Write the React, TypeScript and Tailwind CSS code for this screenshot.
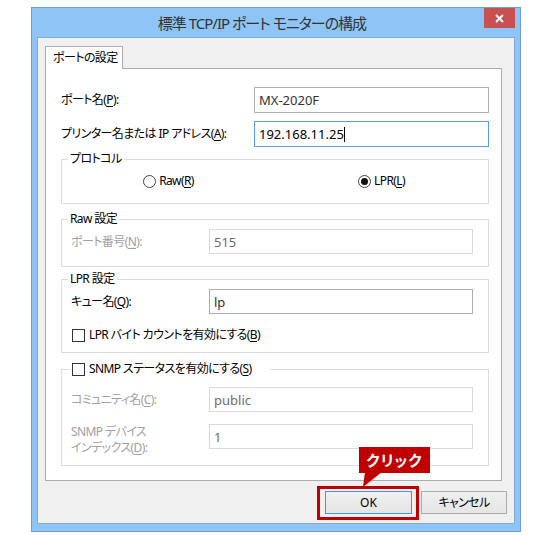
import type { ReactNode } from "react";

const ui = "font-['Noto_Sans','Noto_Sans_CJK_JP',sans-serif] [font-feature-settings:'palt']";

// access-key letter, underlined like a Win32 mnemonic
const K = ({ c }: { c: string }) => <u className="underline-offset-[2px]">{c}</u>;

type BoxProps = {
  value: string;
  disabled?: boolean;
  focused?: boolean;
  w: string;
  h?: string;
  children?: ReactNode;
};

function TextBox({ value, disabled, focused, w, h = "h-[25px]", children }: BoxProps) {
  const border = focused ? "border-[#569de5]" : disabled ? "border-[#d9d9d9]" : "border-[#abadb3]";
  const color = disabled ? "text-[#6d6d6d]" : focused ? "text-black" : "text-[#333]";
  return (
    <div className={`${w} ${h} ${border} ${color} shrink-0 border bg-white px-[4px] flex items-center text-[13px] tracking-normal`}>
      {value}
      {children}
    </div>
  );
}

function Radio({ checked, children }: { checked?: boolean; children: ReactNode }) {
  return (
    <div className="flex items-center gap-[3px]">
      <span className="w-[13px] h-[13px] rounded-full border border-[#444] bg-white flex items-center justify-center">
        {checked && <span className="w-[7px] h-[7px] rounded-full bg-[#111]" />}
      </span>
      <span>{children}</span>
    </div>
  );
}

const CheckBox = () => <span className="w-[13px] h-[13px] shrink-0 border border-[#333] bg-white" />;

export default function App() {
  return (
    <div className={`w-[547px] h-[535px] bg-white pt-[7px] pl-[31px] text-[12px] leading-[16px] tracking-[-0.6px] text-black ${ui}`}>
      {/* window frame */}
      <div className="w-[490px] h-[525px] border border-[#6e9fd1] bg-[#8ec5f6] flex flex-col">
        <div className="h-[29px] flex pr-[5px]">
          <div className="flex-1 flex items-center justify-center pl-[8px] text-[15px] tracking-[-1px] text-[#333]">
            標準 TCP/IP ポート モニターの構成
          </div>
          <button className="w-[31px] h-[20px] bg-[#c75050] flex items-center justify-center">
            <svg width="9" height="9" viewBox="0 0 9 9">
              <path d="M1 1 L8 8 M8 1 L1 8" stroke="white" strokeWidth="1.8" />
            </svg>
          </button>
        </div>

        {/* client area */}
        <div className="mx-[5px] mb-[7px] flex-1 bg-[#f0f0f0] border border-[#84acd5] pl-[7px] pt-[8px] flex flex-col">
          <div className="relative z-10 -mb-px w-[78px] h-[23px] border border-b-0 border-[#acacac] bg-white flex items-center pl-[7px]">
            ポートの設定
          </div>

          <div className="w-[457px] h-[413px] border border-[#acacac] bg-white pt-[18px] pl-[15px] pr-[12px] flex flex-col">
            <div className="flex items-center">
              <span className="flex-1">
                ポート名(<K c="P" />):
              </span>
              <TextBox value="MX-2020F" w="w-[235px]" h="h-[26px]" />
            </div>
            <div className="flex items-center mt-[8px]">
              <span className="flex-1">
                プリンター名または IP アドレス(<K c="A" />):
              </span>
              <TextBox value="192.168.11.25" focused w="w-[235px]" h="h-[26px]">
                <span className="w-px h-[15px] bg-black" />
              </TextBox>
            </div>

            <fieldset className="mt-[4px] border border-[#dcdcdc] min-w-0">
              <legend className="ml-[6px] px-[2px]">プロトコル</legend>
              <div className="h-[36px] pt-[6px] grid grid-cols-2 items-start justify-items-center">
                <Radio>
                  Raw(<K c="R" />)
                </Radio>
                <Radio checked>
                  LPR(<K c="L" />)
                </Radio>
              </div>
            </fieldset>

            <fieldset className="mt-[7px] border border-[#dcdcdc] min-w-0">
              <legend className="ml-[6px] px-[2px]">Raw 設定</legend>
              <div className="h-[39px] pt-[2px] pl-[9px] pr-[15px] flex items-start">
                <span className="flex-1 h-[25px] flex items-center text-[#a0a0a0]">
                  ポート番号(<K c="N" />):
                </span>
                <TextBox value="515" disabled w="w-[264px]" />
              </div>
            </fieldset>

            <fieldset className="mt-[4px] border border-[#dcdcdc] min-w-0">
              <legend className="ml-[6px] px-[2px]">LPR 設定</legend>
              <div className="h-[65px] pt-[2px] pl-[9px] pr-[15px] flex flex-col">
                <div className="flex items-center">
                  <span className="flex-1">
                    キュー名(<K c="Q" />):
                  </span>
                  <TextBox value="lp" w="w-[264px]" />
                </div>
                <div className="mt-[13px] pl-px flex items-center gap-[4px]">
                  <CheckBox />
                  <span>
                    LPR バイト カウントを有効にする(<K c="B" />)
                  </span>
                </div>
              </div>
            </fieldset>

            <fieldset className="mt-[8px] border border-[#dcdcdc] min-w-0">
              <legend className="ml-[8px] pl-[2px] pr-[18px]">
                <span className="flex items-center gap-[4px]">
                  <CheckBox />
                  <span>
                    SNMP ステータスを有効にする(<K c="S" />)
                  </span>
                </span>
              </legend>
              <div className="h-[88px] pt-[10px] pl-[9px] pr-[15px] flex flex-col text-[#a0a0a0]">
                <div className="flex items-center">
                  <span className="flex-1">
                    コミュニティ名(<K c="C" />):
                  </span>
                  <TextBox value="public" disabled w="w-[264px]" />
                </div>
                <div className="mt-[12px] flex items-start">
                  <span className="flex-1">
                    SNMP デバイス
                    <br />
                    インデックス(<K c="D" />):
                  </span>
                  <TextBox value="1" disabled w="w-[264px]" />
                </div>
              </div>
            </fieldset>
          </div>

          <div className="mt-[10px] pr-[7px] flex justify-end gap-[9px] tracking-normal">
            <div className="relative">
              <button className="w-[87px] h-[23px] border border-[#3399ff] bg-gradient-to-b from-[#f0f0f0] to-[#e5e5e5]">
                OK
              </button>
              {/* highlight frame + callout */}
              <span className="absolute -left-[8px] -right-[7px] -top-[5px] -bottom-[6px] border-[3px] border-[#c00000]" />
              <span className="absolute left-[34px] -top-[44px] w-[71px] h-[26px] bg-[#c00000] text-white font-bold text-[15px] flex items-center justify-center tracking-[1px]">
                クリック
              </span>
              <svg className="absolute left-[37px] -top-[19px]" width="22" height="15" viewBox="0 0 22 15">
                <polygon points="3,0 20,0 1,15" fill="#c00000" />
              </svg>
            </div>
            <button className="w-[86px] h-[23px] border border-[#acacac] bg-gradient-to-b from-[#f0f0f0] to-[#e5e5e5] tracking-[-0.6px]">
              キャンセル
            </button>
          </div>
        </div>
      </div>
    </div>
  );
}
